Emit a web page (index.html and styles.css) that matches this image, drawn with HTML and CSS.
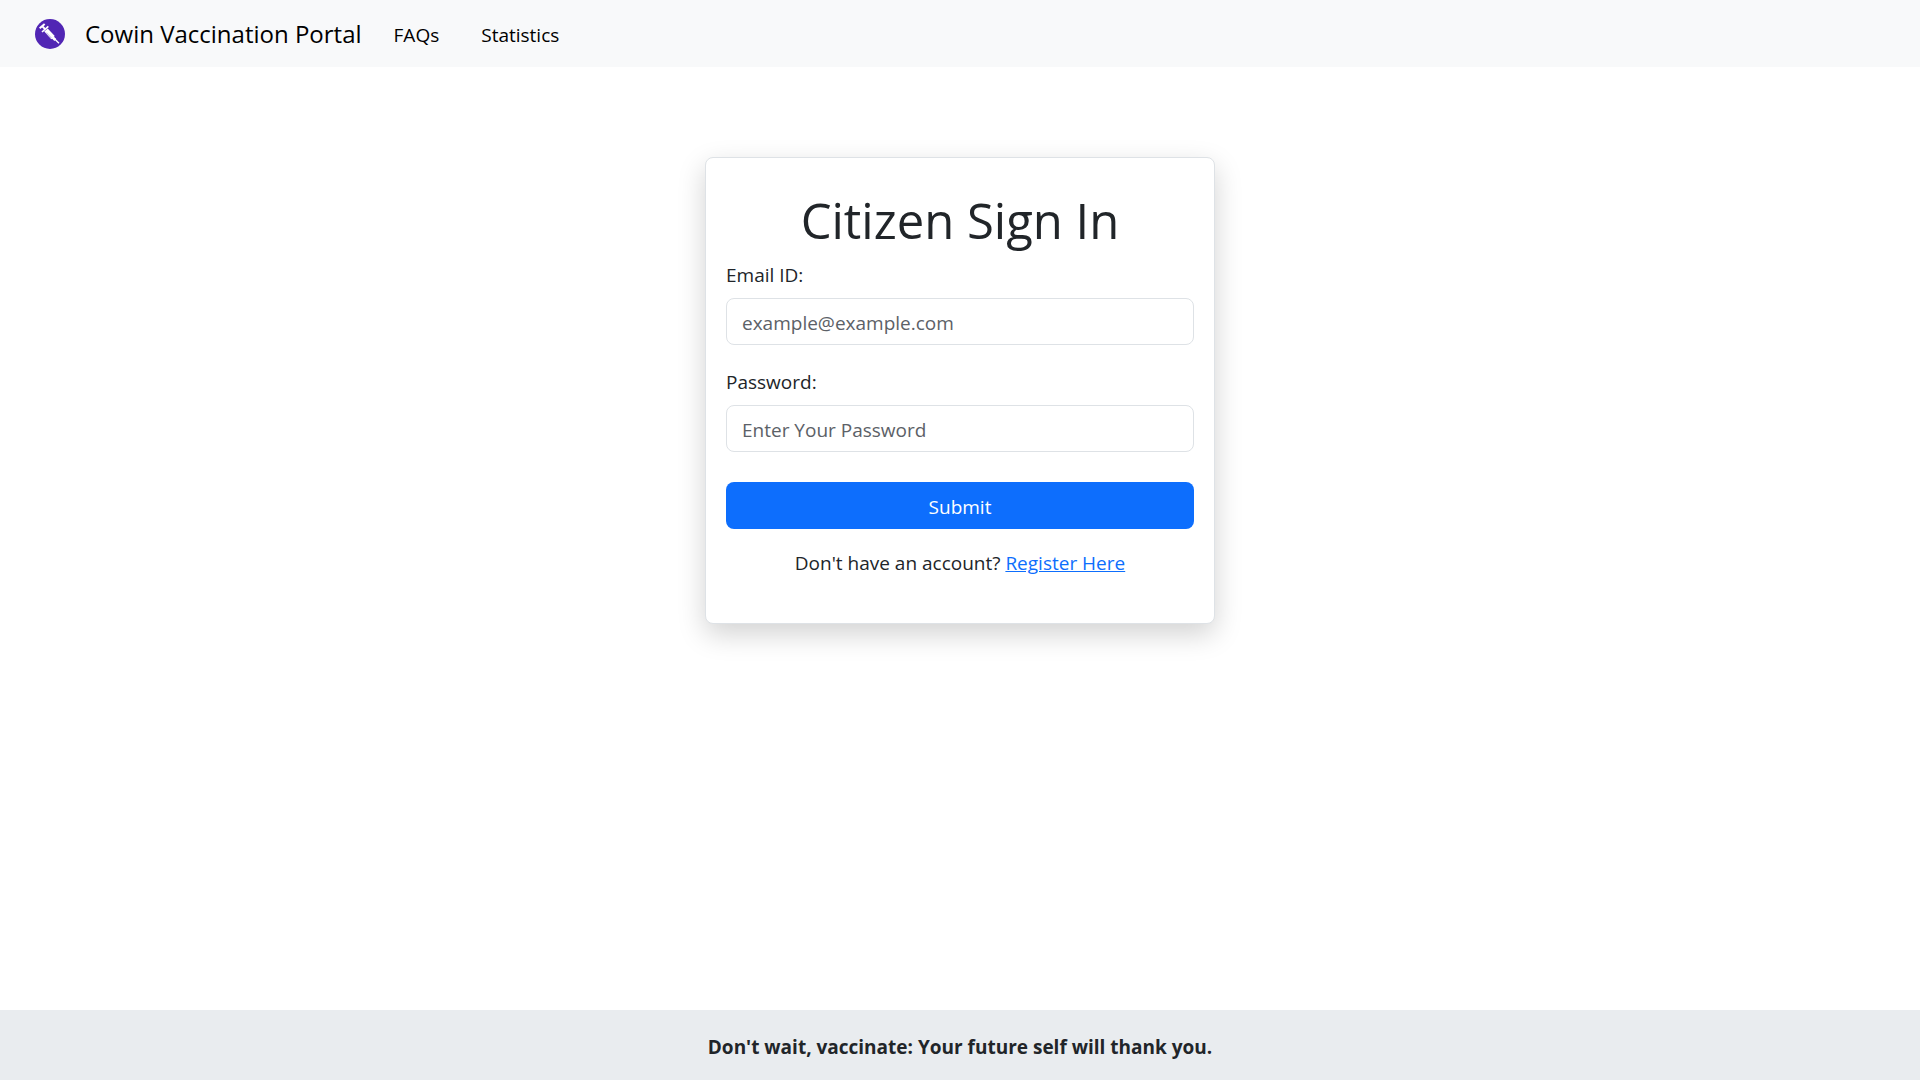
FILE: index.html
```html
<!DOCTYPE html>
<html lang="en">
<head>
  <meta charset="utf-8">
  <meta name="viewport" content="width=device-width, initial-scale=1">
  <title>Cowin Vaccination Portal</title>
  <link rel="stylesheet" href="styles.css">
</head>
<body>
  <header class="navbar">
    <a class="brand" href="#">
      <svg class="brand-logo" viewBox="0 0 90 90" aria-hidden="true">
        <circle cx="45" cy="45" r="45" fill="#5126b4"/>
        <g stroke="#fff" fill="none">
          <path d="M14 28 29 15" stroke-width="6"/>
          <path d="M22 22 31 31" stroke-width="6"/>
          <path d="M21 39 40 22" stroke-width="5"/>
          <path d="M33 33 54 56" stroke-width="14"/>
          <path d="M52 54 61 63" stroke-width="8"/>
          <path d="M59 60 72 73" stroke-width="4"/>
        </g>
        <path d="M34 41 49 57" stroke="#b9a8e0" stroke-width="3"/>
      </svg>
      <span>Cowin Vaccination Portal</span>
    </a>
    <nav class="nav-links">
      <a class="nav-link" href="#">FAQs</a>
      <a class="nav-link" href="#">Statistics</a>
    </nav>
  </header>

  <main class="content">
    <form class="card">
      <h1 class="card-title">Citizen Sign In</h1>
      <div class="field">
        <label for="email">Email ID:</label>
        <input class="input" id="email" type="email" placeholder="example@example.com">
      </div>
      <div class="field">
        <label for="password">Password:</label>
        <input class="input" id="password" type="password" placeholder="Enter Your Password">
      </div>
      <button class="submit" type="submit">Submit</button>
      <p class="register">Don't have an account? <a href="#">Register Here</a></p>
    </form>
  </main>

  <footer class="footer">Don't wait, vaccinate: Your future self will thank you.</footer>
</body>
</html>
```
FILE: styles.css
```css
* {
  box-sizing: border-box;
}

body {
  display: flex;
  flex-direction: column;
  min-height: 100vh;
  margin: 0;
  background: #fff;
  color: #212529;
  font-family: "Open Sans", "Noto Sans", sans-serif;
  font-size: 19px;
  line-height: 30px;
}

.navbar {
  display: flex;
  align-items: center;
  gap: 11px;
  padding: 14px 35px;
  background: #f8f9fa;
}

.brand {
  display: flex;
  align-items: center;
  gap: 20px;
  color: #000;
  font-size: 24px;
  line-height: 39px;
  text-decoration: none;
}

.brand-logo {
  width: 30px;
  height: 30px;
}

.nav-links {
  display: flex;
}

.nav-link {
  padding: 2px 21px 0;
  color: #000;
  text-decoration: none;
}

.content {
  flex: 1;
  padding: 90px 16px;
}

.card {
  display: flex;
  flex-direction: column;
  max-width: 510px;
  margin: 0 auto;
  padding: 32px 20px 45px;
  border: 1px solid #dee2e6;
  border-radius: 8px;
  background: #fff;
  box-shadow: 0 10px 28px rgba(0, 0, 0, 0.18);
}

.card-title {
  margin: 0 0 10px;
  font-size: 49px;
  font-weight: 400;
  line-height: 60px;
  text-align: center;
}

.field {
  display: flex;
  flex-direction: column;
  gap: 8px;
  margin-bottom: 22px;
}

.input {
  width: 100%;
  height: 47px;
  padding: 2px 15px 0;
  border: 1px solid #dee2e6;
  border-radius: 8px;
  background: #fff;
  color: #212529;
  font: inherit;
}

.input::placeholder {
  color: #5c6167;
  opacity: 1;
}

.submit {
  height: 47px;
  margin-top: 8px;
  padding: 2px 15px 0;
  border: 0;
  border-radius: 8px;
  background: #0d6efd;
  color: #fff;
  font: inherit;
}

.register {
  margin: 19px 0 0;
  text-align: center;
}

.register a {
  color: #0d6efd;
}

.footer {
  padding: 22px 20px 18px;
  background: #e9ecef;
  font-weight: 700;
  text-align: center;
}
```
